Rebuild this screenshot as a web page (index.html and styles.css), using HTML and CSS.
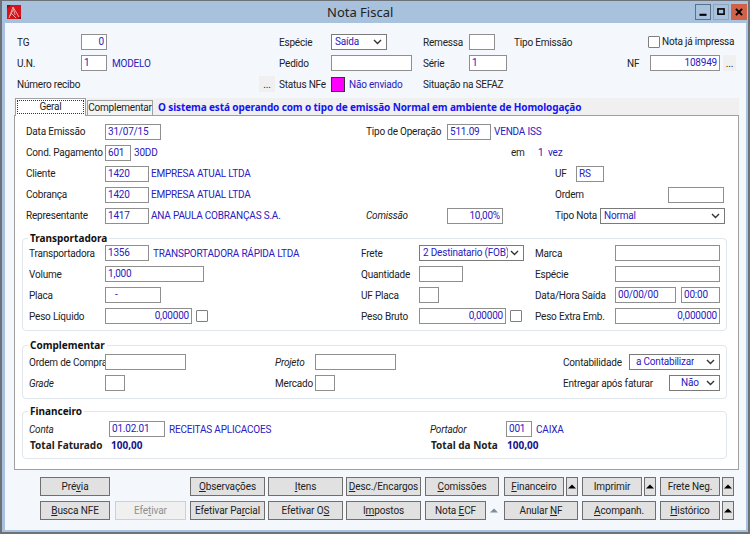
FILE: index.html
```html
<!DOCTYPE html>
<html lang="pt-BR">
<head>
<meta charset="utf-8">
<title>Nota Fiscal</title>
<link rel="stylesheet" href="styles.css">
</head>
<body>
<svg class="defs" width="0" height="0" aria-hidden="true"><defs>
  <symbol id="chev" viewBox="0 0 9 6"><path d="M1 1l3.5 3.5L8 1" fill="none" stroke="#333" stroke-width="1.4"/></symbol>
  <symbol id="up" viewBox="0 0 8 5"><path d="M0 4.5L4 .5l4 4z"/></symbol>
</defs></svg>
<div class="window">
  <header class="titlebar">
    <svg class="appicon" viewBox="0 0 14 14"><rect width="14" height="14" fill="#d4141c"/><path d="M2 13L6 2l6 10M4 8l5 5M6 2l2 8M3 11l3-6" fill="none" stroke="#f4a0a0" stroke-width="1"/><path d="M0 0h4L0 4zM14 14h-3l3-3z" fill="#8c0c10"/></svg>
    <h1 class="title">Nota Fiscal</h1>
    <div class="winbtns">
      <span class="winbtn focus"><svg viewBox="0 0 16 16"><rect x="4" y="10" width="8" height="2.4" fill="#000"/></svg></span>
      <span class="winbtn"><svg viewBox="0 0 16 16"><rect x="4.5" y="4.5" width="7" height="6" fill="none" stroke="#000" stroke-width="1.8"/></svg></span>
      <span class="winbtn close"><svg viewBox="0 0 16 16"><path d="M4.5 4.5l7 7M11.5 4.5l-7 7" stroke="#000" stroke-width="2.2"/></svg></span>
    </div>
  </header>
  <main class="client">
    <section class="head">
      <div class="row h1">
        <span>TG</span><div class="ctl w26 num">0</div>
        <span>Espécie</span><div class="ctl sel w56 p3"><span>Saída</span><svg><use href="#chev"/></svg></div>
        <span>Remessa</span><div class="ctl w26"></div>
        <span>Tipo Emissão</span>
        <div class="check"><i class="box"></i><span>Nota já impressa</span></div>
      </div>
      <div class="row h2">
        <span>U.N.</span><div class="ctl w26">1</div><span class="val">MODELO</span>
        <span>Pedido</span><div class="ctl w81"></div>
        <span>Série</span><div class="ctl w38">1</div>
        <span>NF</span><div class="ctl w70 num">108949</div><span class="dots">...</span>
      </div>
      <div class="row h3">
        <span>Número recibo</span><span class="dots large">...</span>
        <span>Status NFe</span><i class="status"></i><span class="val">Não enviado</span>
        <span>Situação na SEFAZ</span>
      </div>
    </section>
    <nav class="tabs">
      <span class="tab active"><b>Geral</b></span>
      <span class="tab">Complementar</span>
      <strong class="msg">O sistema está operando com o tipo de emissão Normal em ambiente de Homologação</strong>
    </nav>
    <section class="panel">
      <div class="main-rows">
        <div class="row m1"><span>Data Emissão</span><div class="ctl w56">31/07/15</div><span>Tipo de Operação</span><div class="ctl w44">511.09</div><span class="val">VENDA ISS</span></div>
        <div class="row m2"><span>Cond. Pagamento</span><div class="ctl w26">601</div><span class="val">30DD</span><span>em</span><span class="val">1</span><span class="val">vez</span></div>
        <div class="row m3"><span>Cliente</span><div class="ctl w44">1420</div><span class="val">EMPRESA ATUAL LTDA</span><span>UF</span><div class="ctl w28">RS</div></div>
        <div class="row m4"><span>Cobrança</span><div class="ctl w44">1420</div><span class="val">EMPRESA ATUAL LTDA</span><span>Ordem</span><div class="ctl w56"></div></div>
        <div class="row m5"><span>Representante</span><div class="ctl w44">1417</div><span class="val">ANA PAULA COBRANÇAS S.A.</span><em>Comissão</em><div class="ctl w56 num">10,00%</div><span>Tipo Nota</span><div class="ctl sel w125 p3"><span>Normal</span><svg><use href="#chev"/></svg></div></div>
      </div>
      <fieldset class="group g-transp">
        <legend>Transportadora</legend>
        <div class="row t1"><span>Transportadora</span><div class="ctl w44">1356</div><span class="val">TRANSPORTADORA RÁPIDA LTDA</span><span>Frete</span><div class="ctl sel w105 p3"><span class="clip">2 Destinatario (FOB)</span><svg><use href="#chev"/></svg></div><span>Marca</span><div class="ctl w105"></div></div>
        <div class="row t2"><span>Volume</span><div class="ctl w99">1,000</div><span>Quantidade</span><div class="ctl w44"></div><span>Espécie</span><div class="ctl w105"></div></div>
        <div class="row t3"><span>Placa</span><div class="ctl w56 plate">-</div><span>UF Placa</span><div class="ctl w20"></div><span>Data/Hora Saída</span><div class="ctl w61">00/00/00</div><div class="ctl w39">00:00</div></div>
        <div class="row t4"><span>Peso Líquido</span><div class="ctl w87 num">0,00000</div><i class="box"></i><span>Peso Bruto</span><div class="ctl w87 num">0,00000</div><i class="box"></i><span>Peso Extra Emb.</span><div class="ctl w105 num">0,000000</div></div>
      </fieldset>
      <fieldset class="group g-compl">
        <legend>Complementar</legend>
        <div class="row c1"><span>Ordem de Compra</span><div class="ctl w81"></div><em>Projeto</em><div class="ctl w81"></div><span>Contabilidade</span><div class="ctl sel w91 p7"><span>a Contabilizar</span><svg><use href="#chev"/></svg></div></div>
        <div class="row c2"><em>Grade</em><div class="ctl w20"></div><span>Mercado</span><div class="ctl w20"></div><span>Entregar após faturar</span><div class="ctl sel w51 p12"><span>Não</span><svg><use href="#chev"/></svg></div></div>
      </fieldset>
      <fieldset class="group g-fin">
        <legend>Financeiro</legend>
        <div class="row f1"><em>Conta</em><div class="ctl w56">01.02.01</div><span class="val">RECEITAS APLICACOES</span><em>Portador</em><div class="ctl w26">001</div><span class="val">CAIXA</span></div>
        <div class="row f2"><b>Total Faturado</b><b class="total">100,00</b><b>Total da Nota</b><b class="total">100,00</b></div>
      </fieldset>
    </section>
    <footer class="actions">
      <div class="brow b1">
        <button class="btn w70">Pré<u>v</u>ia</button>
        <button class="btn w75"><u>O</u>bservações</button>
        <button class="btn w75"><u>I</u>tens</button>
        <button class="btn w75"><u>D</u>esc./Encargos</button>
        <button class="btn w74"><u>C</u>omissões</button>
        <button class="btn w60"><u>F</u>inanceiro</button>
        <button class="btn arrow"><svg><use href="#up"/></svg></button>
        <button class="btn w60">Imprimir</button>
        <button class="btn arrow"><svg><use href="#up"/></svg></button>
        <button class="btn w60">Frete Neg.</button>
        <button class="btn arrow"><svg><use href="#up"/></svg></button>
      </div>
      <div class="brow b2">
        <button class="btn w70"><u>B</u>usca NFE</button>
        <button class="btn w71 off">Efe<u>t</u>ivar</button>
        <button class="btn w75">Efetivar Pa<u>r</u>cial</button>
        <button class="btn w75">Efetivar O<u>S</u></button>
        <button class="btn w75">I<u>m</u>postos</button>
        <button class="btn w61">Nota <u>E</u>CF</button>
        <button class="btn arrow off"><svg><use href="#up"/></svg></button>
        <button class="btn w74">Anular <u>N</u>F</button>
        <button class="btn w74"><u>A</u>companh.</button>
        <button class="btn w60"><u>H</u>istórico</button>
        <button class="btn arrow"><svg><use href="#up"/></svg></button>
      </div>
    </footer>
  </main>
</div>
</body>
</html>
```

FILE: styles.css
```css
* { box-sizing: border-box; }
html, body { margin: 0; padding: 0; }
body { width: 750px; height: 534px; overflow: hidden; font: 10px/14px Roboto, "Liberation Sans", sans-serif; letter-spacing: -.2px; color: #222; }
.defs { display: block; height: 0; }

.window { width: 750px; height: 534px; display: flex; flex-direction: column; background: #a8c1dc; border: 2px solid #6d7278; border-top-width: 1px; border-bottom-width: 2px; padding: 0 2px 2px 3px; }

.titlebar { height: 22px; flex: none; display: flex; align-items: center; padding-left: 2px; }
.appicon { width: 14px; height: 14px; display: block; }
.title { margin: 0 0 0 306px; font: 400 13px/18px "Noto Sans", sans-serif; letter-spacing: 0; color: #222; width: 90px; white-space: nowrap; }
.winbtns { margin-left: auto; display: flex; gap: 2px; margin-right: -1px; }
.winbtn { width: 16px; height: 16px; display: block; border: 1px solid #8ea5bd; background: #a8c1dc; }
.winbtn svg { display: block; width: 14px; height: 14px; }
.winbtn.focus { border-color: #5d7184; }
.winbtn.close { background: #cf6249; border-color: #cf6249; }

.client { flex: 1; background: #f4f7fc; padding: 0 0 0 9px; min-height: 0; }

.row { display: grid; height: 16px; align-items: center; white-space: nowrap; }
.row + .row { margin-top: 5px; }
.row > span, .row > em, .row > b { display: block; }
.head .row > span:not(.dots), .group .row > span, .group .row > em { padding-top: 2px; }

.head { padding: 11px 0 0 3px; height: 75px; }
.h1 { grid-template-columns: 64px 198px 52px 92px 46px 45px 134px auto; }
.h2 { grid-template-columns: 64px 31px 167px 52px 92px 46px 158px 23px 73px 16px; }
.h3 { grid-template-columns: 242px 20px 52px 18px 74px auto; }

.ctl { height: 16px; border: 1px solid #8f8f8f; background: #fff; padding: 0 2px; line-height: 14px; color: #2a20c0; overflow: hidden; white-space: nowrap; }
.num { text-align: right; }
.plate { padding-left: 9px; }
.sel { display: flex; align-items: center; justify-content: space-between; border-color: #7a7a7a; padding-right: 4px; }
.sel span { overflow: hidden; }
.sel svg { width: 9px; height: 6px; flex: none; margin-left: 2px; }
.sel .clip { text-overflow: clip; }
.p3 { padding-left: 3px; }
.p7 { padding-left: 6px; }
.p12 { padding-left: 11px; }

.w20 { width: 20px; } .w26 { width: 26px; } .w28 { width: 28px; } .w38 { width: 38px; }
.w39 { width: 39px; } .w44 { width: 44px; } .w51 { width: 51px; } .w56 { width: 56px; }
.w60 { width: 60px; } .w61 { width: 61px; } .w70 { width: 70px; } .w71 { width: 71px; }
.w74 { width: 74px; } .w75 { width: 75px; } .w81 { width: 81px; } .w87 { width: 87px; }
.w91 { width: 91px; } .w99 { width: 99px; } .w105 { width: 105px; } .w125 { width: 125px; }

.val { color: #2a20c0; }
.box { display: block; width: 12px; height: 12px; border: 1px solid #7f7f7f; border-radius: 1px; background: #fff; }
.check { display: flex; align-items: center; gap: 2px; }
.status { display: block; width: 14px; height: 15px; background: #ff00ff; border: 1px solid #333; }
.dots { display: block; width: 13px; height: 16px; background: #f0f0f0; text-align: center; line-height: 14px; padding-top: 2px; }
.dots.large { width: 16px; }

.tabs { display: flex; align-items: flex-end; height: 17px; width: 725px; background: #f0f0f0; position: relative; z-index: 1; }
.tab { display: block; height: 15px; width: 66px; border: 1px solid #a0a0a0; border-bottom: 0; background: #f4f4f4; text-align: center; line-height: 14px; white-space: nowrap; }
.tab.active { width: 71px; height: 18px; background: #fff; margin: 0 1px -1px 1px; padding: 1px; }
.tab.active b { display: block; font-weight: 400; height: 14px; line-height: 12px; border: 1px dotted #333; }
.msg { align-self: center; margin-left: 5px; font: bold 10px/14px "Noto Sans", sans-serif; letter-spacing: -.12px; color: #1414f0; white-space: nowrap; }

.panel { width: 725px; height: 355px; border: 1px solid #a0a0a0; background: #fff; padding: 8px 10px 0 11px; }
.m1 { grid-template-columns: 79px 261px 81px 47px auto; }
.m2 { grid-template-columns: 79px 29px 377px 27px 10px auto; }
.m3 { grid-template-columns: 79px 46px 404px 21px 92px; }
.m4 { grid-template-columns: 79px 46px 404px 113px 56px; }
.m5 { grid-template-columns: 79px 46px 215px 81px 108px 45px 125px; }

.group { margin: 0 0 0 -4px; padding: 0 0 0 6px; border: 1px solid #e1e6ec; border-radius: 4px; width: 705px; }
.group legend { font: bold 10px/14px "Noto Sans", sans-serif; letter-spacing: 0; color: #111; padding: 0 2px; margin-left: -1px; }
.g-transp { margin-top: 7px; padding-bottom: 6px; }
.g-compl { margin-top: 7px; padding-bottom: 7px; }
.g-fin { margin-top: 5px; padding-bottom: 6px; }
.t1 { grid-template-columns: 76px 48px 208px 58px 116px 80px 105px; }
.t2 { grid-template-columns: 76px 256px 58px 116px 80px 105px; }
.t3 { grid-template-columns: 76px 256px 58px 116px 80px 66px 39px; }
.t4 { grid-template-columns: 76px 91px 165px 58px 91px 25px 80px 105px; }
.c1 { margin-top: 2px; grid-template-columns: 76px 170px 40px 248px 66px 91px; }
.c2 { grid-template-columns: 76px 170px 40px 248px 106px 51px; }
.f1 { margin-top: 3px; grid-template-columns: 80px 60px 261px 76px 30px auto; }
.row.f2 { height: 14px; margin-top: 1px; grid-template-columns: 81px 320px 76px auto; }
.total { color: #14148c; }
.row b { font: bold 10px/14px "Noto Sans", sans-serif; letter-spacing: 0; padding-left: 1px; }

.actions { padding: 7px 0 0 26px; }
.brow { display: grid; height: 19px; }
.brow + .brow { margin-top: 5px; }
.b1 { grid-template-columns: 150px 78px 78px 79px 79px 62px 16px 62px 16px 62px 12px; }
.b2 { grid-template-columns: 75px 75px 78px 78px 79px 63px 16px 78px 78px 62px 12px; }
.btn { height: 19px; padding: 0; border: 1px solid #6f6f6f; background: #e1e1e1; font: 10px/17px Roboto, sans-serif; letter-spacing: -.1px; color: #222; white-space: nowrap; }
.btn.off { border-color: #cfcfcf; background: #f0f0f0; color: #8f8f8f; }
.arrow { width: 12px; display: flex; align-items: center; justify-content: center; }
.arrow svg { width: 8px; height: 5px; display: block; }
.arrow.off { background: #f4f7fc; border-color: #f4f7fc; }
.arrow.off svg { fill: #7f8c99; }
```
